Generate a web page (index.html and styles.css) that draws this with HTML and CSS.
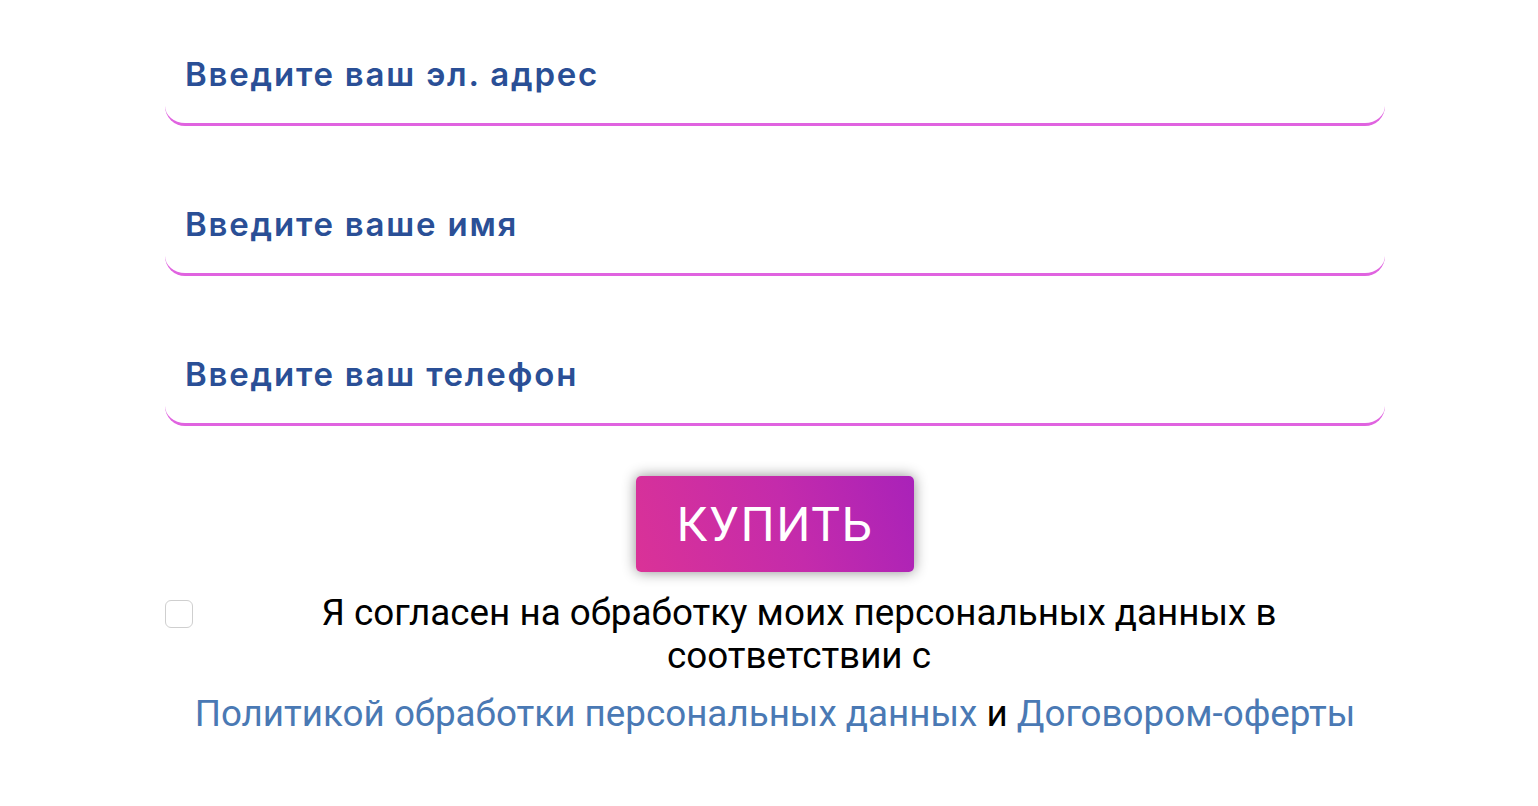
FILE: index.html
```html
<!DOCTYPE html>
<html lang="ru">
<head>
<meta charset="utf-8">
<title>Форма</title>
<link rel="stylesheet" href="styles.css">
</head>
<body>
<form class="form">
  <input class="field" type="email" placeholder="Введите ваш эл. адрес">
  <input class="field" type="text" placeholder="Введите ваше имя">
  <input class="field" type="tel" placeholder="Введите ваш телефон">
  <div class="actions">
    <button class="buy" type="button">КУПИТЬ</button>
  </div>
  <div class="agree">
    <input class="check" type="checkbox" id="agree">
    <label class="agree-text" for="agree">Я согласен на обработку моих персональных данных в соответствии с</label>
  </div>
  <p class="links"><a href="#">Политикой обработки персональных данных</a> и <a href="#">Договором-оферты</a></p>
</form>
</body>
</html>
```
FILE: styles.css
```css
html, body {
  margin: 0;
  padding: 0;
  background: #fff;
}
.form {
  width: 1220px;
  margin: 26px 0 0 165px;
  display: flex;
  flex-direction: column;
  gap: 50px;
  font-family: Roboto, "Liberation Sans", sans-serif;
}
.field {
  box-sizing: border-box;
  height: 100px;
  width: 100%;
  border: 0;
  border-bottom: 3px solid #e063e0;
  border-radius: 20px;
  padding: 0 20px 2px;
  background: #fff;
  outline: none;
  font-family: Inter, "Liberation Sans", sans-serif;
  font-size: 33px;
  font-weight: 600;
  letter-spacing: 1.8px;
  color: #2a4f96;
}
.field::placeholder {
  color: #2a4f96;
  opacity: 1;
}
.actions {
  display: flex;
  justify-content: center;
}
.buy {
  width: 278px;
  height: 96px;
  border: 0;
  border-radius: 5px;
  background: linear-gradient(70deg, #da3297 0%, #c42bab 55%, #a922b9 100%);
  box-shadow: 0 0 14px rgba(0, 0, 0, 0.45);
  color: #fff;
  font-family: Roboto, "Liberation Sans", sans-serif;
  font-size: 48px;
  font-weight: 400;
  letter-spacing: 1.5px;
  cursor: pointer;
}
.agree {
  display: flex;
  align-items: flex-start;
  gap: 20px;
  margin-top: -31px;
}
.check {
  appearance: none;
  -webkit-appearance: none;
  flex: none;
  box-sizing: border-box;
  width: 28px;
  height: 28px;
  margin: 9px 0 0;
  border: 1px solid #cfcfcf;
  border-radius: 6px;
  background: #fff;
}
.agree-text {
  flex: 1;
  padding: 0 50px;
  text-align: center;
  font-size: 36.8px;
  line-height: 43px;
  color: #000;
}
.links {
  margin: -35px 0 0;
  text-align: center;
  font-size: 36.8px;
  line-height: 43px;
  color: #000;
}
.links a {
  color: #4a79b4;
  text-decoration: none;
}
```
